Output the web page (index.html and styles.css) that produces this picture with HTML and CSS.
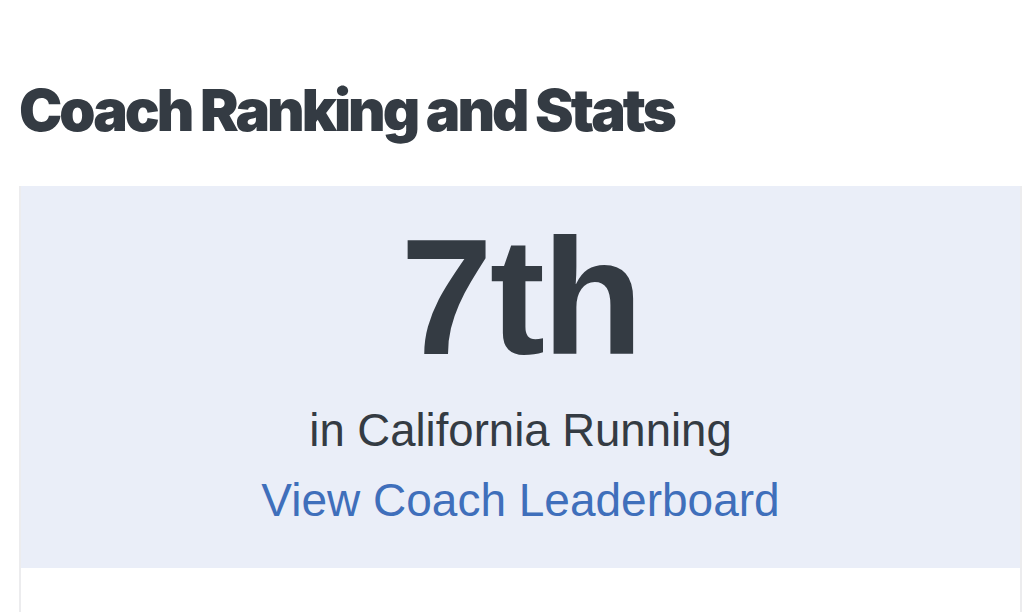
FILE: index.html
```html
<!DOCTYPE html>
<html>
<head>
<meta charset="utf-8">
<link rel="stylesheet" href="styles.css">
</head>
<body>
<main class="page">
  <h1 class="title">Coach Ranking and Stats</h1>
  <section class="card">
    <div class="rank">
      <div class="rank-num">7th</div>
      <div class="rank-label">in California Running</div>
      <a class="rank-link" href="#">View Coach Leaderboard</a>
    </div>
    <div class="card-body"></div>
  </section>
</main>
</body>
</html>
```
FILE: styles.css
```css
html, body {
  margin: 0;
  padding: 0;
  background: #ffffff;
}
.page {
  padding: 0 2px 0 19px;
  font-family: "Liberation Sans", Arial, sans-serif;
  color: #343b43;
}
.title {
  margin: 0;
  padding-top: 76px;
  height: 186px;
  box-sizing: border-box;
  font-family: Inter, Lato, sans-serif;
  font-weight: 900;
  font-size: 58px;
  line-height: 68px;
  letter-spacing: -3px;
  color: #343b43;
}
.card {
  border: 2px solid #ececee;
  border-top: none;
  background: #ffffff;
}
.rank {
  background: #eaeef8;
  height: 382px;
  display: flex;
  flex-direction: column;
  align-items: center;
  padding-top: 26px;
  box-sizing: border-box;
}
.rank-num {
  font-weight: 700;
  font-size: 166px;
  line-height: 170px;
  letter-spacing: -3px;
}
.rank-label {
  font-size: 45.5px;
  line-height: 66px;
  margin-top: 16px;
}
.rank-link {
  font-size: 46px;
  line-height: 66px;
  margin-top: 3px;
  color: #3f6fbb;
  text-decoration: none;
}
.card-body {
  height: 44px;
}
```
